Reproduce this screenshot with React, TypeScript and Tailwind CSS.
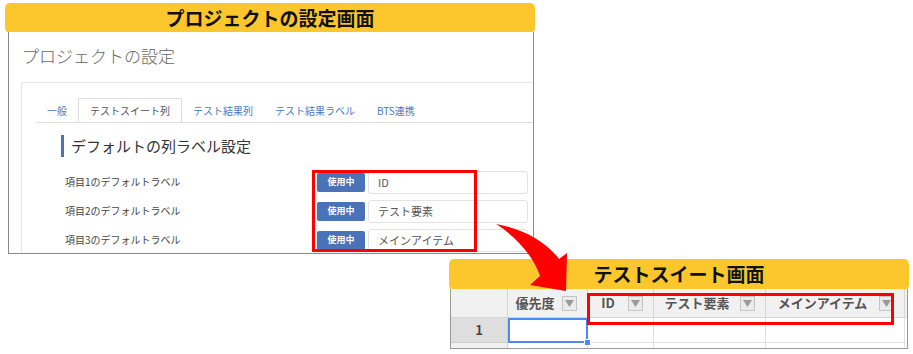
import React from "react";

const font = "font-['Noto_Sans_CJK_JP','Noto_Sans',sans-serif]";

const rows = [
  { label: "項目1のデフォルトラベル", value: "ID" },
  { label: "項目2のデフォルトラベル", value: "テスト要素" },
  { label: "項目3のデフォルトラベル", value: "メインアイテム" },
];

const tabs = ["一般", "テストスイート列", "テスト結果列", "テスト結果ラベル", "BTS連携"];

function DropButton() {
  return (
    <div className="w-[15px] h-[15px] mr-[10px] shrink-0 border border-[#c4c4c4] bg-[#ebebeb] flex items-center justify-center">
      <svg width="9" height="7" viewBox="0 0 9 7">
        <path d="M0 0 L9 0 L4.5 7 Z" fill="#9a9a9a" />
      </svg>
    </div>
  );
}

function HeaderCell({ text }: { text: string }) {
  return (
    <div className="flex items-center border-r border-b border-[#d6d6d6] bg-[#f1f1f1]">
      <span className="flex-1 text-center text-[13px] font-bold text-[#555] whitespace-nowrap">{text}</span>
      <DropButton />
    </div>
  );
}

function ProjectSettings() {
  return (
    <div className="absolute left-[5px] top-[3px] w-[530px]">
      <div className="h-[30px] rounded-[5px] bg-[#fcc72c] flex items-center justify-center text-[19px] font-bold text-[#111]">
        プロジェクトの設定画面
      </div>
      <div className="ml-[3px] w-[526px] h-[222px] -mt-[1px] border border-t-0 border-[#8a8a8a] bg-white overflow-hidden">
        <div className="pl-[13px] pt-[12px] h-[37px] text-[17px] leading-[24px] font-light text-[#666]">
          プロジェクトの設定
        </div>
        <div className="ml-[12px] mt-[13px] w-[600px] h-[200px] border border-[#e6e6e6]">
          <div className="ml-[14px] mt-[15px] flex border-b border-[#dddddd]">
            {tabs.map((t, i) =>
              i === 1 ? (
                <div key={t} className="h-[24px] px-[11px] -mb-px flex items-center border border-b-0 border-[#dddddd] bg-white text-[10px] text-[#555]">
                  {t}
                </div>
              ) : (
                <div key={t} className="h-[24px] px-[11px] flex items-center text-[10px] text-[#4a78c2]">
                  {t}
                </div>
              )
            )}
          </div>
          <div className="ml-[39px] mt-[12px] flex items-center gap-[7px]">
            <div className="w-[3px] h-[22px] bg-[#4a72b8]" />
            <div className="text-[15px] text-[#333]">デフォルトの列ラベル設定</div>
          </div>
          <div className="mt-[13px] flex flex-col gap-[6px]">
            {rows.map((r) => (
              <div key={r.label} className="flex items-center h-[23px]">
                <div className="ml-[43px] w-[252px] text-[10px] text-[#444] -mt-[2px]">{r.label}</div>
                <div className="w-[48px] h-[19px] rounded-[2px] bg-[#4a72b8] flex items-center justify-center text-[9px] font-bold text-white">
                  使用中
                </div>
                <div className="ml-[3px] w-[160px] h-[23px] border border-[#e3e3e3] rounded-[3px] flex items-center pl-[9px] text-[11px] text-[#555]">
                  {r.value}
                </div>
              </div>
            ))}
          </div>
        </div>
      </div>
    </div>
  );
}

function TestSuite() {
  return (
    <div className="absolute left-[449px] top-[259px] w-[460px]">
      <div className="h-[31px] rounded-[5px] bg-[#fcc72c] flex items-center justify-center text-[19px] font-bold text-[#111]">
        テストスイート画面
      </div>
      <div className="ml-[1px] w-[458px] h-[60px] -mt-px border border-t-0 border-[#999] bg-white overflow-hidden">
        <div className="grid grid-cols-[57px_80px_66px_112px_139px_1fr] grid-rows-[29px_25px_10px]">
          <div className="border-r border-b border-[#d6d6d6] bg-[#f1f1f1]" />
          <HeaderCell text="優先度" />
          <HeaderCell text="ID" />
          <HeaderCell text="テスト要素" />
          <HeaderCell text="メインアイテム" />
          <div className="border-b border-[#d6d6d6] bg-[#f1f1f1]" />

          <div className="border-r border-b border-[#cfcfcf] bg-[#dedede] flex items-center justify-center text-[13px] font-bold text-[#444]">
            1
          </div>
          <div className="relative border-2 border-[#4a8af4]">
            <div className="absolute -right-[5px] -bottom-[5px] w-[7px] h-[7px] bg-[#4a8af4] border border-white" />
          </div>
          <div className="border-r border-b border-[#e0e0e0]" />
          <div className="border-r border-b border-[#e0e0e0]" />
          <div className="border-r border-b border-[#e0e0e0]" />
          <div className="border-b border-[#e0e0e0]" />

          <div className="border-r border-[#cfcfcf] bg-[#f1f1f1]" />
          <div className="border-r border-[#e0e0e0]" />
          <div className="border-r border-[#e0e0e0]" />
          <div className="border-r border-[#e0e0e0]" />
          <div className="border-r border-[#e0e0e0]" />
          <div />
        </div>
      </div>
    </div>
  );
}

export default function App() {
  return (
    <div className={`relative w-[913px] h-[354px] bg-white overflow-hidden ${font}`}>
      <ProjectSettings />
      <TestSuite />

      {/* highlight boxes */}
      <div className="absolute left-[312px] top-[170px] w-[165px] h-[82px] border-[3px] border-[#ff0000]" />
      <div className="absolute left-[587px] top-[293px] w-[307px] h-[32px] border-[3px] border-[#ff0000]" />

      {/* arrow */}
      <svg className="absolute left-0 top-0 pointer-events-none" width="913" height="354" viewBox="0 0 913 354">
        <path
          d="M496 224 C520 228 545 240 559 259 L567 253 L566 291 L530 285 L540 276 C533 255 515 236 496 224 Z"
          fill="#ff0000"
        />
      </svg>
    </div>
  );
}
